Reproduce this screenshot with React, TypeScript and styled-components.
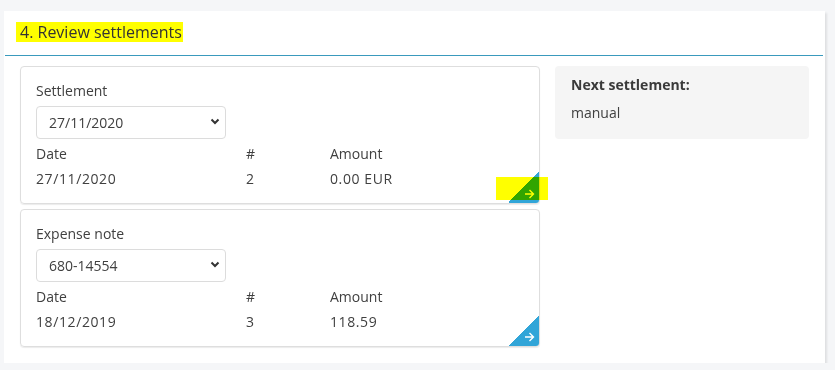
import React from "react";
import styled, { createGlobalStyle } from "styled-components";

const GlobalStyle = createGlobalStyle`
  body {
    margin: 0;
    background: #f5f6f8;
    font-family: "Open Sans", "Noto Sans", sans-serif;
    font-size: 14px;
    color: #404040;
  }
`;

const Panel = styled.section`
  margin: 11px 0 0 4px;
  width: 821px;
  height: 352px;
  background: #fff;
  box-shadow: 2px 2px 2px rgba(0, 0, 0, 0.09);
  box-sizing: border-box;
`;

const Header = styled.header`
  height: 44px;
  display: flex;
  align-items: center;
  padding-left: 11px;
  border-bottom: 1px solid #3a9abd;
  margin-right: 2px;
  margin-left: 1px;
`;

const Title = styled.h2`
  margin: 0;
  font-size: 16px;
  font-weight: 400;
  line-height: 20px;
  color: #333;
  background: #ffff00;
  padding: 0 1px 0 4px;
  margin-top: -2px;
`;

const Body = styled.div`
  display: grid;
  grid-template-columns: 520px 1fr;
  column-gap: 15px;
  padding: 10px 16px 16px 16px;
  align-items: start;
`;

const Stack = styled.div`
  display: flex;
  flex-direction: column;
  gap: 5px;
`;

const CardWrap = styled.div`
  position: relative;
`;

const Card = styled.div`
  position: relative;
  overflow: hidden;
  border: 1px solid #dedede;
  border-radius: 4px;
  box-shadow: 0 1px 1px rgba(0, 0, 0, 0.08);
  padding: 14px 15px 14px 15px;
  height: 138px;
  box-sizing: border-box;
`;

const Label = styled.div`
  line-height: 20px;
  color: #404040;
  margin-bottom: 5px;
`;

const SelectBox = styled.div`
  position: relative;
  width: 190px;
  height: 33px;
`;

const Select = styled.select`
  appearance: none;
  width: 100%;
  height: 100%;
  border: 1px solid #dcdcdc;
  border-radius: 4px;
  background: #fff;
  padding: 0 12px;
  font-family: inherit;
  font-size: 14px;
  color: #404040;
  outline: none;
`;

const Chevron = styled.svg`
  position: absolute;
  right: 6px;
  top: 12px;
  pointer-events: none;
`;

const Grid = styled.div`
  display: grid;
  grid-template-columns: 210px 84px 1fr;
  row-gap: 5px;
  margin-top: 5px;
  line-height: 20px;
`;

const Value = styled.span`
  letter-spacing: 0.6px;
`;

const Corner = styled.div`
  position: absolute;
  right: 0;
  bottom: 0;
  width: 31px;
  height: 31px;
  background: linear-gradient(to bottom right, transparent 50%, #31a5d8 50%);
  display: flex;
  align-items: flex-end;
  justify-content: flex-end;
  padding: 0 4px 4px 0;
  box-sizing: border-box;
`;

const Marker = styled.div`
  position: absolute;
  left: 476px;
  top: 111px;
  width: 52px;
  height: 23px;
  background: #ffff00;
  mix-blend-mode: multiply;
  pointer-events: none;
`;

const Aside = styled.aside`
  background: #f5f5f5;
  border-radius: 4px;
  padding: 9px 16px 16px;
  display: flex;
  flex-direction: column;
  gap: 8px;
  line-height: 20px;
`;

const Strong = styled.div`
  font-weight: 700;
  color: #3a3a3a;
`;

type Doc = {
  label: string;
  selected: string;
  date: string;
  count: number;
  amount: string;
  marked?: boolean;
};

const docs: Doc[] = [
  { label: "Settlement", selected: "27/11/2020", date: "27/11/2020", count: 2, amount: "0.00 EUR", marked: true },
  { label: "Expense note", selected: "680-14554", date: "18/12/2019", count: 3, amount: "118.59" },
];

const DocCard = ({ d }: { d: Doc }) => (
  <CardWrap>
    <Card>
      <Label>{d.label}</Label>
      <SelectBox>
        <Select defaultValue={d.selected}>
          <option>{d.selected}</option>
        </Select>
        <Chevron width="10" height="7" viewBox="0 0 10 7">
          <polyline points="1.5,1.5 5,5 8.5,1.5" fill="none" stroke="#333" strokeWidth="2" />
        </Chevron>
      </SelectBox>
      <Grid>
        <span>Date</span>
        <span>#</span>
        <span>Amount</span>
        <Value>{d.date}</Value>
        <Value>{d.count}</Value>
        <Value>{d.amount}</Value>
      </Grid>
      <Corner>
        <svg width="11" height="10" viewBox="0 0 11 10">
          <path d="M1 5h8.5M5.5 1l4 4-4 4" fill="none" stroke="#fff" strokeWidth="1.4" />
        </svg>
      </Corner>
    </Card>
    {d.marked && <Marker />}
  </CardWrap>
);

export default function App() {
  return (
    <>
      <GlobalStyle />
      <Panel>
        <Header>
          <Title>4. Review settlements</Title>
        </Header>
        <Body>
          <Stack>
            {docs.map((d) => (
              <DocCard key={d.label} d={d} />
            ))}
          </Stack>
          <Aside>
            <Strong>Next settlement:</Strong>
            <div>manual</div>
          </Aside>
        </Body>
      </Panel>
    </>
  );
}
